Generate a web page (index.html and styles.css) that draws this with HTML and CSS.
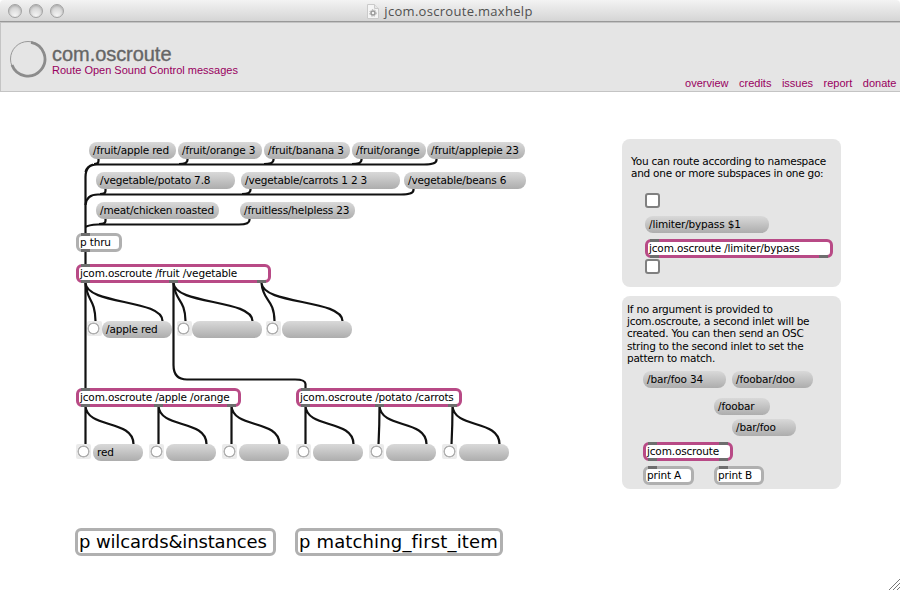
FILE: index.html
```html
<!DOCTYPE html>
<html lang="en">
<head>
<meta charset="utf-8">
<title>jcom.oscroute.maxhelp</title>
<link rel="stylesheet" href="styles.css">
</head>
<body>
<div class="window">
  <div class="titlebar">
    <div class="lights"><i></i><i></i><i></i></div>
    <div class="title">
      <svg width="12" height="15" viewBox="0 0 12 15"><path d="M.5.5h7l4 4v10H.5z" fill="#f5f5f5" stroke="#cacaca"/><path d="M7.500 .5v4h4" fill="#e6e6e6" stroke="#cacaca"/><circle cx="6" cy="9" r="2" fill="none" stroke="#999" stroke-width="1.500"/><circle cx="6" cy="9" r="3.300" fill="none" stroke="#aaa" stroke-dasharray="1.400 1.400"/></svg>
      <span>jcom.oscroute.maxhelp</span>
    </div>
  </div>
  <header class="banner">
    <svg class="logo" width="38" height="38" viewBox="0 0 38 38"><circle cx="19" cy="19" r="17.500" fill="none" stroke="#999" stroke-width="1"/><path d="M22 2.300A17 17 0 1 1 3 25" fill="none" stroke="#8c8c8c" stroke-width="2.800"/></svg>
    <div class="heading"><h1>com.oscroute</h1><p>Route Open Sound Control messages</p></div>
    <nav><a>overview</a><a>credits</a><a>issues</a><a>report</a><a>donate</a></nav>
  </header>
  <main class="canvas">
    <section class="panel panel-a"><p>You can route according to namespace<br>and one or more subspaces in one go:</p></section>
    <section class="panel panel-b"><p>If no argument is provided to<br>jcom.oscroute, a second inlet will be<br>created. You can then send an OSC<br>string to the second inlet to set the<br>pattern to match.</p></section>

    <svg class="wires" width="900" height="498" viewBox="0 92 900 498">
      <path d="M98.500 158V161Q98.500 164 94 164M187.500 158V160Q187.500 164 179 164M273.500 158V160Q273.500 164 264 164M361.500 158V160Q361.500 164 352 164M436.500 158V160Q436.500 164.500 424 164.500H97Q85.500 164.500 85.500 177V235M93 164.500Q87 166 85.500 172"/>
      <path d="M105.500 188V191Q105.500 194 100 194M250.500 188V190Q250.500 194 242 194M413.500 188V190Q413.500 194.500 401 194.500H98Q86.500 194.500 85.500 205"/>
      <path d="M105.500 218V221Q105.500 224 99 224M249.500 218V220Q249.500 224.500 239 224.500H98Q88 225 85.500 227"/>
      <path d="M85.500 250V265M85.500 282V390M173.500 282V365Q173.500 379.500 187 379.500H295Q305.500 379.500 305.500 384V390"/>
      <path d="M85.500 283C87 302 95 298 95.500 321M85.500 283C87 305 162 299 162.500 321"/>
      <path d="M173.500 283C175 302 185 298 185.500 321M173.500 283C175 305 252 299 252.500 321"/>
      <path d="M261.500 283C263 302 274 298 274.500 321M261.500 283C263 305 342 299 342.500 321"/>
      <path d="M85.500 406V445M85.500 406C87 429 133 419 133.500 444M158.500 406V445M158.500 406C160 429 206 419 206.500 444M231.500 406V445M231.500 406C233 429 279 419 279.500 444"/>
      <path d="M305.500 406V445M305.500 406C307 429 353 419 353.500 444M379.500 406Q379.500 425 378.500 445M379.500 406C381 429 426 419 426.500 444M452.500 406Q452.500 425 451.500 445M452.500 406C454 429 499 419 499.500 444"/>
    </svg>

    <div class="msg m-apple">/fruit/apple red</div>
    <div class="msg m-orange3">/fruit/orange 3</div>
    <div class="msg m-banana">/fruit/banana 3</div>
    <div class="msg m-orange">/fruit/orange</div>
    <div class="msg m-applepie">/fruit/applepie 23</div>
    <div class="msg m-potato">/vegetable/potato 7.8</div>
    <div class="msg m-carrots">/vegetable/carrots 1 2 3</div>
    <div class="msg m-beans">/vegetable/beans 6</div>
    <div class="msg m-chicken">/meat/chicken roasted</div>
    <div class="msg m-helpless">/fruitless/helpless 23</div>
    <div class="obj o-thru">p thru</div>
    <div class="obj route o-main">jcom.oscroute /fruit /vegetable</div>

    <div class="bang b1"></div><div class="msg r1">/apple red</div>
    <div class="bang b2"></div><div class="msg r2"></div>
    <div class="bang b3"></div><div class="msg r3"></div>

    <div class="obj route o-fruit">jcom.oscroute /apple /orange</div>
    <div class="obj route o-veg">jcom.oscroute /potato /carrots</div>
    <div class="bang b4"></div><div class="msg r4">red</div>
    <div class="bang b5"></div><div class="msg r5"></div>
    <div class="bang b6"></div><div class="msg r6"></div>
    <div class="bang b7"></div><div class="msg r7"></div>
    <div class="bang b8"></div><div class="msg r8"></div>
    <div class="bang b9"></div><div class="msg r9"></div>

    <div class="obj big o-wild">p wilcards&amp;instances</div>
    <div class="obj big o-match">p matching_first_item</div>

    <div class="toggle t1"></div>
    <div class="msg m-limiter">/limiter/bypass $1</div>
    <div class="obj route o-limiter">jcom.oscroute /limiter/bypass</div>
    <div class="toggle t2"></div>

    <div class="msg m-bar34">/bar/foo 34</div>
    <div class="msg m-doo">/foobar/doo</div>
    <div class="msg m-foobar">/foobar</div>
    <div class="msg m-barfoo">/bar/foo</div>
    <div class="obj route o-bare">jcom.oscroute</div>
    <div class="obj o-pa">print A</div>
    <div class="obj o-pb">print B</div>

    <svg class="ports" width="900" height="498" viewBox="0 92 900 498">
      <path d="M81 234.500h9M81 250.500h9M81 265.500h9M81 281.500h9M169 281.500h9M257 281.500h9M81 389.500h9M81 405.500h9M154 405.500h9M227 405.500h9M301 389.500h9M301 405.500h9M375 405.500h9M448 405.500h9M650 240.500h9M650 256.500h9M819 256.500h9M648 443.500h9M719 443.500h9M648 459.500h9M719 459.500h9M648 467.500h9M719 467.500h9"/>
    </svg>
    <svg class="grip" width="12" height="12" viewBox="0 0 12 12"><path d="M1 12L12 1M5 12L12 5M9 12L12 9"/></svg>
  </main>
</div>
</body>
</html>
```
FILE: styles.css
```css
* { box-sizing: border-box; }
body { margin: 0; background: #fff; overflow: hidden; }
.window { width: 900px; height: 590px; display: flex; flex-direction: column; }

.titlebar {
  height: 22px; flex: none; display: grid; grid-template-columns: 72px 1fr 72px; align-items: center;
  background: linear-gradient(#f3f3f3, #d5d5d5); border-bottom: 1px solid #999;
  border-radius: 4px 4px 0 0;
}
.lights { display: flex; gap: 7px; padding-left: 8px; }
.lights i {
  width: 14px; height: 14px; border-radius: 50%; border: 1px solid #a2a2a2;
  background: radial-gradient(circle at 50% 90%, #f5f5f5, #cfcfcf 80%);
  box-shadow: inset 0 1px 2px #aaa;
}
.title { display: flex; justify-content: center; align-items: center; gap: 5px; font: 13px/18px "Open Sans", "Noto Sans", sans-serif; color: #505050; padding-top: 1px; }
.title span { letter-spacing: .3px; white-space: nowrap; }

.banner {
  height: 70px; flex: none; display: flex; background: #e5e5e5; border: 1px solid #c4c4c4; border-right: 0;
  font-family: "Liberation Sans", Arial, sans-serif; color: #980060; padding: 17px 3.5px 0 8px;
}
.logo { flex: none; }
.heading { margin: 4px 0 0 5px; }
h1 { margin: 0; font-size: 20px; line-height: 20px; font-weight: 400; color: #666; letter-spacing: -.05px; -webkit-text-stroke: .35px #666; }
.banner p { margin: 0; font-size: 11px; line-height: 12px; }
nav { margin-left: auto; align-self: flex-end; display: flex; gap: 10.5px; font-size: 11px; line-height: 15px; }

.canvas { position: relative; flex: 1; font: 10.5px/17px "DejaVu Sans", Verdana, sans-serif; letter-spacing: -.16px; color: #000; }
.wires, .ports { position: absolute; left: 0; top: 0; fill: none; stroke: #111; stroke-width: 2.2; }
.ports { stroke: #6e6e6e; stroke-width: 3; }
.panel { position: absolute; left: 622px; width: 219px; border-radius: 8px; background: #e5e5e5; }
.panel p { margin: 0; line-height: 12.2px; letter-spacing: -.25px; white-space: nowrap; }
.panel-a { top: 47px; height: 148px; padding: 16px 9px; }
.panel-b { top: 204px; height: 193px; padding: 7px 5px; }

.msg { position: absolute; height: 17px; padding-left: 4px; border-radius: 8px; background: linear-gradient(#d9d9d9, #adadad); white-space: nowrap; }
.obj { position: absolute; height: 19px; padding-left: 1px; border: 3px solid #b0b0b0; border-radius: 6px; background: #fff; line-height: 13px; white-space: nowrap; }
.route { border-color: #b84a86; }
.big { height: 28px; font-size: 18px; line-height: 22px; }
.bang { position: absolute; width: 15px; height: 15px; background: #ebebeb; border-radius: 2px; }
.bang::after { content: ""; position: absolute; left: 1px; top: 1px; width: 13px; height: 13px; border-radius: 50%; background: radial-gradient(circle, #fff 4.3px, #b0b0b0 4.9px 5.7px, transparent 6.3px); }
.toggle { position: absolute; left: 645px; width: 15px; height: 15px; border: 2px solid #808080; border-radius: 3px; background: #fff; }

.m-apple { left: 89px; top: 50px; width: 87px; }
.m-orange3 { left: 178px; top: 50px; width: 84px; }
.m-banana { left: 264px; top: 50px; width: 86px; }
.m-orange { left: 352px; top: 50px; width: 74px; }
.m-applepie { left: 427px; top: 50px; width: 98px; }
.m-potato { left: 96px; top: 80px; width: 139px; }
.m-carrots { left: 241px; top: 80px; width: 159px; }
.m-beans { left: 404px; top: 80px; width: 122px; }
.m-chicken { left: 96px; top: 110px; width: 123px; }
.m-helpless { left: 240px; top: 110px; width: 115px; }
.o-thru { left: 76px; top: 141px; width: 46px; }
.o-main { left: 76px; top: 172px; width: 195px; }
.b1, .b2, .b3 { top: 229px; }
.b1 { left: 87px; } .b2 { left: 177px; } .b3 { left: 266px; }
.b1::after, .b2::after, .b3::after { left: 0; }
.r1, .r2, .r3 { top: 229px; width: 70px; }
.r1 { left: 102px; } .r2 { left: 192px; } .r3 { left: 282px; }
.o-fruit { left: 76px; top: 296px; width: 165px; }
.o-veg { left: 296px; top: 296px; width: 166px; }
.b4, .b5, .b6, .b7, .b8, .b9 { top: 352px; }
.b4 { left: 76px; } .b5 { left: 149px; } .b6 { left: 222px; } .b7 { left: 296px; } .b8 { left: 369px; } .b9 { left: 442px; }
.r4, .r5, .r6, .r7, .r8, .r9 { top: 352px; width: 50px; }
.r4 { left: 93px; } .r5 { left: 166px; } .r6 { left: 239px; } .r7 { left: 313px; } .r8 { left: 386px; } .r9 { left: 459px; }
.o-wild { left: 75px; top: 436px; width: 201px; letter-spacing: -.13px; }
.o-match { left: 295px; top: 436px; width: 208px; letter-spacing: .15px; }
.t1 { top: 101px; } .t2 { top: 167px; }
.m-limiter { left: 645px; top: 124px; width: 124px; }
.o-limiter { left: 645px; top: 147px; width: 188px; }
.m-bar34 { left: 643px; top: 279px; width: 83px; }
.m-doo { left: 732px; top: 279px; width: 81px; }
.m-foobar { left: 714px; top: 306px; width: 56px; }
.m-barfoo { left: 732px; top: 327px; width: 64px; }
.o-bare { left: 643px; top: 350px; width: 90px; }
.o-pa { left: 643px; top: 374px; width: 51px; }
.o-pb { left: 714px; top: 374px; width: 50px; }
.grip { position: absolute; right: 0; bottom: 0; stroke: #777; stroke-width: 1; }
```
